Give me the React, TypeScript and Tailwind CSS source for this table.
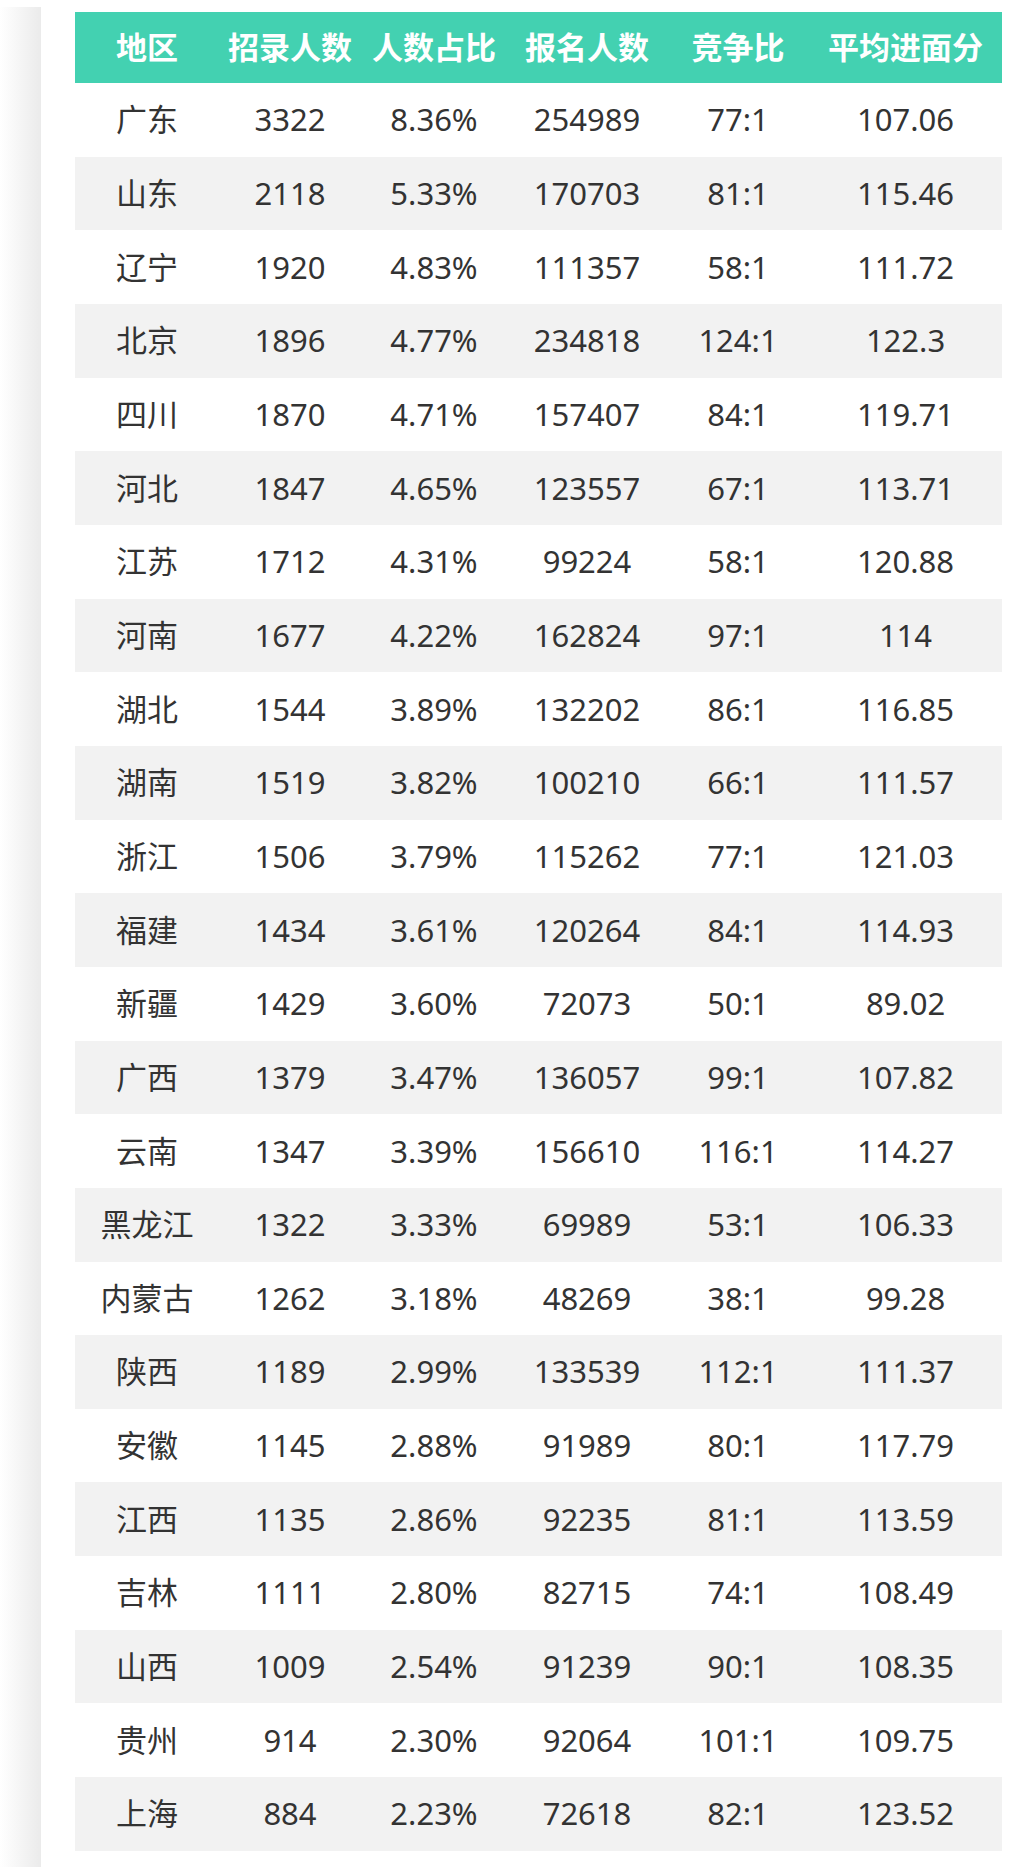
import React from "react";

const rows: [string, string, string, string, string, string][] = [
  ["广东", "3322", "8.36%", "254989", "77:1", "107.06"],
  ["山东", "2118", "5.33%", "170703", "81:1", "115.46"],
  ["辽宁", "1920", "4.83%", "111357", "58:1", "111.72"],
  ["北京", "1896", "4.77%", "234818", "124:1", "122.3"],
  ["四川", "1870", "4.71%", "157407", "84:1", "119.71"],
  ["河北", "1847", "4.65%", "123557", "67:1", "113.71"],
  ["江苏", "1712", "4.31%", "99224", "58:1", "120.88"],
  ["河南", "1677", "4.22%", "162824", "97:1", "114"],
  ["湖北", "1544", "3.89%", "132202", "86:1", "116.85"],
  ["湖南", "1519", "3.82%", "100210", "66:1", "111.57"],
  ["浙江", "1506", "3.79%", "115262", "77:1", "121.03"],
  ["福建", "1434", "3.61%", "120264", "84:1", "114.93"],
  ["新疆", "1429", "3.60%", "72073", "50:1", "89.02"],
  ["广西", "1379", "3.47%", "136057", "99:1", "107.82"],
  ["云南", "1347", "3.39%", "156610", "116:1", "114.27"],
  ["黑龙江", "1322", "3.33%", "69989", "53:1", "106.33"],
  ["内蒙古", "1262", "3.18%", "48269", "38:1", "99.28"],
  ["陕西", "1189", "2.99%", "133539", "112:1", "111.37"],
  ["安徽", "1145", "2.88%", "91989", "80:1", "117.79"],
  ["江西", "1135", "2.86%", "92235", "81:1", "113.59"],
  ["吉林", "1111", "2.80%", "82715", "74:1", "108.49"],
  ["山西", "1009", "2.54%", "91239", "90:1", "108.35"],
  ["贵州", "914", "2.30%", "92064", "101:1", "109.75"],
  ["上海", "884", "2.23%", "72618", "82:1", "123.52"],
];

const headers = ["地区", "招录人数", "人数占比", "报名人数", "竞争比", "平均进面分"];

export default function App() {
  return (
    <div
      className="flex w-[1034px] h-[1867px] bg-white overflow-hidden"
      style={{ fontFamily: '"Noto Sans", "Noto Sans CJK SC", sans-serif' }}
    >
      <div className="w-[41px] mt-[7px] shrink-0 bg-gradient-to-r from-white to-[#ebebeb]" />
      <div className="ml-[34px] mt-[12px] w-[927px]">
        <div className="grid grid-cols-[144px_142px_146px_160px_142px_193px] h-[71px] bg-[#43d1b1] text-white font-bold text-[31px]">
          {headers.map((h) => (
            <div key={h} className="flex items-center justify-center whitespace-nowrap leading-none">
              {h}
            </div>
          ))}
        </div>
        {rows.map((r, i) => (
          <div
            key={r[0]}
            className={
              "grid grid-cols-[144px_142px_146px_160px_142px_193px] h-[73.667px] text-[31px] text-[#333333] " +
              (i % 2 === 1 ? "bg-[#f2f2f2]" : "bg-white")
            }
          >
            {r.map((c, j) => (
              <div key={j} className="flex items-center justify-center whitespace-nowrap leading-none">
                {c}
              </div>
            ))}
          </div>
        ))}
      </div>
    </div>
  );
}
